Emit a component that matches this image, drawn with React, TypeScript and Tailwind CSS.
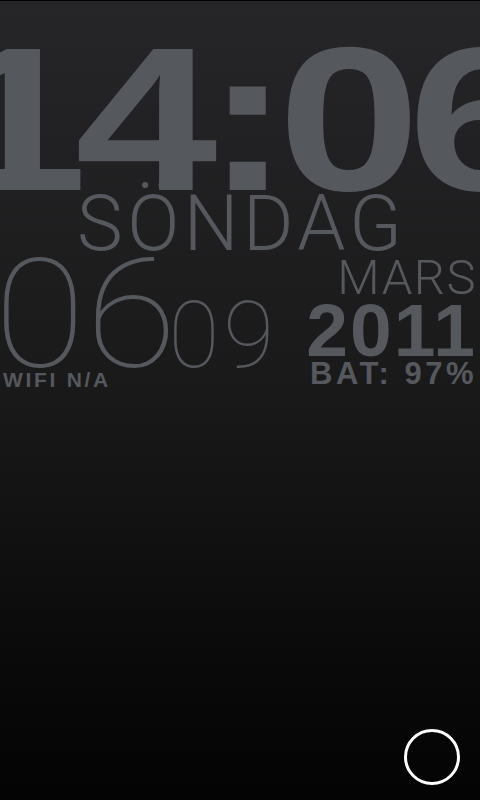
const roboto = "font-['Roboto',sans-serif]";
const arial = "font-['Liberation_Sans',Arial,sans-serif] font-bold";

export default function App() {
  return (
    <div className="flex h-[800px] w-[480px] flex-col overflow-hidden border-t border-black bg-linear-to-b from-[#262628] via-[#19191a] to-[#040404] text-[#55585d]">
      {/* big clock */}
      <div
        className={`${arial} mt-[15px] ml-[-55px] origin-left scale-x-[1.25] whitespace-nowrap text-[205px] leading-none tracking-[-10px]`}
      >
        14:06
      </div>

      {/* day of week */}
      <div className={`${roboto} -mt-[35px] ml-[77px] whitespace-nowrap text-[77px] font-light leading-none tracking-[4.5px]`}>
        SÖNDAG
      </div>

      <div className="-mt-[24px] flex justify-between">
        <div className="flex flex-col">
          <div className={`${roboto} flex items-baseline font-thin leading-none`}>
            <span className="-ml-[6px] origin-left scale-x-[1.1] text-[152px]">06</span>
            <span className="ml-[8px] text-[93px] tracking-[4px]">09</span>
          </div>
          <div className={`${arial} -mt-[22px] ml-[3px] text-[21px] leading-none tracking-[2.7px]`}>
            WIFI N/A
          </div>
        </div>

        <div className="flex flex-col items-end pr-[3px]">
          <div className={`${roboto} mt-[14px] text-[49px] font-light leading-none tracking-[1.5px]`}>MARS</div>
          <div className={`${arial} -mt-[9px] text-[75px] leading-none tracking-[2px]`}>2011</div>
          <div className={`${arial} -mt-[10px] text-[31px] leading-none tracking-[3.5px]`}>BAT: 97%</div>
        </div>
      </div>

      <div className="mt-auto mb-[15px] mr-[20px] flex justify-end">
        <div className="size-[56px] rounded-full border-[3.5px] border-white" />
      </div>
    </div>
  );
}
